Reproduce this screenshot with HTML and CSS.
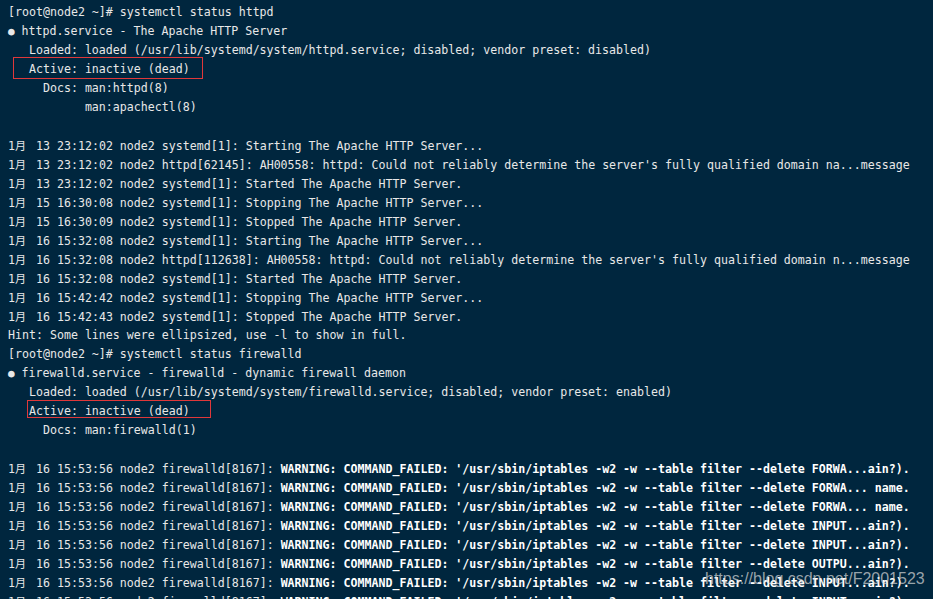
FILE: index.html
```html
<!DOCTYPE html>
<html lang="zh-CN">
<head>
    <meta charset="UTF-8">
    <meta name="viewport" content="width=device-width, initial-scale=1.0">
    <title>systemctl status</title>
    <link rel="stylesheet" href="styles.css">
</head>
<body>
    <div class="term">
        <div class="ln">[root@node2 ~]# systemctl status httpd</div>
        <div class="ln"><span class="dot">●</span> httpd.service - The Apache HTTP Server</div>
        <div class="ln">   Loaded: loaded (/usr/lib/systemd/system/httpd.service; disabled; vendor preset: disabled)</div>
        <div class="ln">   <span class="mark mark-a">Active: inactive (dead)</span></div>
        <div class="ln">     Docs: man:httpd(8)</div>
        <div class="ln">           man:apachectl(8)</div>
        <div class="ln"></div>
        <div class="ln">1<span class="cjk">月</span> 13 23:12:02 node2 systemd[1]: Starting The Apache HTTP Server...</div>
        <div class="ln">1<span class="cjk">月</span> 13 23:12:02 node2 httpd[62145]: AH00558: httpd: Could not reliably determine the server's fully qualified domain na...message</div>
        <div class="ln">1<span class="cjk">月</span> 13 23:12:02 node2 systemd[1]: Started The Apache HTTP Server.</div>
        <div class="ln">1<span class="cjk">月</span> 15 16:30:08 node2 systemd[1]: Stopping The Apache HTTP Server...</div>
        <div class="ln">1<span class="cjk">月</span> 15 16:30:09 node2 systemd[1]: Stopped The Apache HTTP Server.</div>
        <div class="ln">1<span class="cjk">月</span> 16 15:32:08 node2 systemd[1]: Starting The Apache HTTP Server...</div>
        <div class="ln">1<span class="cjk">月</span> 16 15:32:08 node2 httpd[112638]: AH00558: httpd: Could not reliably determine the server's fully qualified domain n...message</div>
        <div class="ln">1<span class="cjk">月</span> 16 15:32:08 node2 systemd[1]: Started The Apache HTTP Server.</div>
        <div class="ln">1<span class="cjk">月</span> 16 15:42:42 node2 systemd[1]: Stopping The Apache HTTP Server...</div>
        <div class="ln">1<span class="cjk">月</span> 16 15:42:43 node2 systemd[1]: Stopped The Apache HTTP Server.</div>
        <div class="ln">Hint: Some lines were ellipsized, use -l to show in full.</div>
        <div class="ln">[root@node2 ~]# systemctl status firewalld</div>
        <div class="ln"><span class="dot">●</span> firewalld.service - firewalld - dynamic firewall daemon</div>
        <div class="ln">   Loaded: loaded (/usr/lib/systemd/system/firewalld.service; disabled; vendor preset: enabled)</div>
        <div class="ln">   <span class="mark mark-b">Active: inactive (dead)</span></div>
        <div class="ln">     Docs: man:firewalld(1)</div>
        <div class="ln"></div>
        <div class="ln">1<span class="cjk">月</span> 16 15:53:56 node2 firewalld[8167]: <b>WARNING: COMMAND_FAILED: '/usr/sbin/iptables -w2 -w --table filter --delete FORWA...ain?).</b></div>
        <div class="ln">1<span class="cjk">月</span> 16 15:53:56 node2 firewalld[8167]: <b>WARNING: COMMAND_FAILED: '/usr/sbin/iptables -w2 -w --table filter --delete FORWA... name.</b></div>
        <div class="ln">1<span class="cjk">月</span> 16 15:53:56 node2 firewalld[8167]: <b>WARNING: COMMAND_FAILED: '/usr/sbin/iptables -w2 -w --table filter --delete FORWA... name.</b></div>
        <div class="ln">1<span class="cjk">月</span> 16 15:53:56 node2 firewalld[8167]: <b>WARNING: COMMAND_FAILED: '/usr/sbin/iptables -w2 -w --table filter --delete INPUT...ain?).</b></div>
        <div class="ln">1<span class="cjk">月</span> 16 15:53:56 node2 firewalld[8167]: <b>WARNING: COMMAND_FAILED: '/usr/sbin/iptables -w2 -w --table filter --delete INPUT...ain?).</b></div>
        <div class="ln">1<span class="cjk">月</span> 16 15:53:56 node2 firewalld[8167]: <b>WARNING: COMMAND_FAILED: '/usr/sbin/iptables -w2 -w --table filter --delete OUTPU...ain?).</b></div>
        <div class="ln">1<span class="cjk">月</span> 16 15:53:56 node2 firewalld[8167]: <b>WARNING: COMMAND_FAILED: '/usr/sbin/iptables -w2 -w --table filter --delete INPUT...ain?).</b></div>
        <div class="ln">1<span class="cjk">月</span> 16 15:53:56 node2 firewalld[8167]: <b>WARNING: COMMAND_FAILED: '/usr/sbin/iptables -w2 -w --table filter --delete INPUT...ain?).</b></div>
    </div>

    <div class="watermark">https://blog.csdn.net/F2001523</div>
</body>
</html>
```

FILE: styles.css
```css
body {
    margin: 0;
    padding: 0;
    height: 599px;
    overflow: hidden;
    background: #00263e;
    position: relative;
}

.term {
    padding: 3px 0 0 8px;
    color: #e8e8e8;
    font-family: "DejaVu Sans Mono", "Liberation Mono", monospace;
    font-size: 11.627px;
}

.ln {
    height: 19px;
    line-height: 19px;
    white-space: pre;
}

.ln b {
    font-weight: bold;
    color: #ffffff;
}

.cjk {
    display: inline-block;
    width: 14px;
    font-family: "Noto Sans CJK SC", sans-serif;
    font-size: 11px;
}

.dot {
    font-size: 11px;
}

/* red boxes drawn over the screenshot */
.mark {
    position: relative;
}

.mark::after {
    content: "";
    position: absolute;
    border: 1px solid #e0383a;
    pointer-events: none;
}

.mark-a::after {
    left: -16px;
    right: -13px;
    top: -5px;
    bottom: -3px;
}

.mark-b::after {
    left: -2px;
    right: -21px;
    top: -4px;
    bottom: 0;
}

.watermark {
    position: absolute;
    left: 705px;
    top: 570px;
    font-family: "Liberation Sans", Arial, sans-serif;
    font-size: 16px;
    color: rgba(220, 220, 220, 0.7);
    white-space: nowrap;
}
```
